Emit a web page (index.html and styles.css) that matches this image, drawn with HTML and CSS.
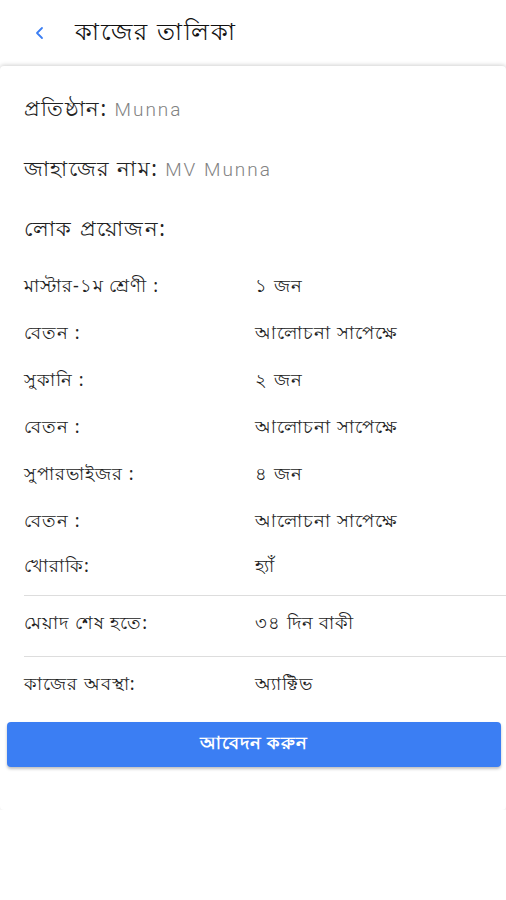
FILE: index.html
```html
<!DOCTYPE html>
<html lang="bn">
<head>
<meta charset="utf-8">
<link rel="stylesheet" href="styles.css">
</head>
<body>
<header class="topbar">
  <svg class="back" width="12" height="14" viewBox="0 0 12 14"><path d="M8 2 L3 7 L8 12" fill="none" stroke="#3b7ef3" stroke-width="1.8" stroke-linecap="round" stroke-linejoin="round"/></svg>
  <h1 class="title">কাজের তালিকা</h1>
</header>
<main class="card">
  <p class="info">প্রতিষ্ঠান: <span class="muted">Munna</span></p>
  <p class="info">জাহাজের নাম: <span class="muted">MV Munna</span></p>
  <p class="info">লোক প্রয়োজন:</p>
  <div class="rows">
    <div class="row"><span>মাস্টার-১ম শ্রেণী :</span><span>১ জন</span></div>
    <div class="row"><span>বেতন :</span><span>আলোচনা সাপেক্ষে</span></div>
    <div class="row"><span>সুকানি :</span><span>২ জন</span></div>
    <div class="row"><span>বেতন :</span><span>আলোচনা সাপেক্ষে</span></div>
    <div class="row"><span>সুপারভাইজর :</span><span>৪ জন</span></div>
    <div class="row"><span>বেতন :</span><span>আলোচনা সাপেক্ষে</span></div>
    <div class="row last"><span>খোরাকি:</span><span>হ্যাঁ</span></div>
  </div>
  <div class="row sep"><span>মেয়াদ শেষ হতে:</span><span>৩৪ দিন বাকী</span></div>
  <div class="row sep"><span>কাজের অবস্থা:</span><span>অ্যাক্টিভ</span></div>
  <button class="apply">আবেদন করুন</button>
</main>
</body>
</html>
```
FILE: styles.css
```css
* { box-sizing: border-box; }
body {
  margin: 0;
  background: #fff;
  font-family: "Noto Sans", "Roboto", sans-serif;
  color: #222;
}
.topbar {
  height: 66px;
  display: flex;
  align-items: center;
  padding-left: 34px;
  gap: 29px;
}
.title {
  margin: 0;
  font-size: 24px;
  font-weight: 400;
  letter-spacing: 2px;
  color: #111;
}
.card {
  height: 744px;
  padding: 12px 0 0 24px;
  box-shadow: 0 -1px 4px rgba(0,0,0,0.18);
  border-radius: 4px;
  display: flex;
  flex-direction: column;
}
.info {
  margin: 0;
  height: 60px;
  line-height: 60px;
  font-size: 21px;
  letter-spacing: 1.4px;
}
.muted {
  color: #828282;
  font-family: "Roboto", sans-serif;
  font-size: 19px;
  font-weight: 300;
  letter-spacing: 2px;
}
.rows { display: flex; flex-direction: column; padding-top: 6px; }
.row {
  display: grid;
  grid-template-columns: 231px 1fr;
  height: 47px;
  align-items: center;
  font-size: 18px;
  letter-spacing: 1px;
}
.row.last { height: 43px; margin-bottom: 6px; }
.row.sep {
  border-top: 1px solid #ddd;
  height: 61px;
  padding-bottom: 4px;
}
.apply {
  margin: 5px 5px 0 -17px;
  height: 45px;
  border: none;
  border-radius: 4px;
  background: #3b7ef3;
  color: #fff;
  font-family: inherit;
  font-size: 18px;
  font-weight: 600;
  letter-spacing: 0.8px;
  box-shadow: 0 2px 3px rgba(0,0,0,0.25);
}
```
